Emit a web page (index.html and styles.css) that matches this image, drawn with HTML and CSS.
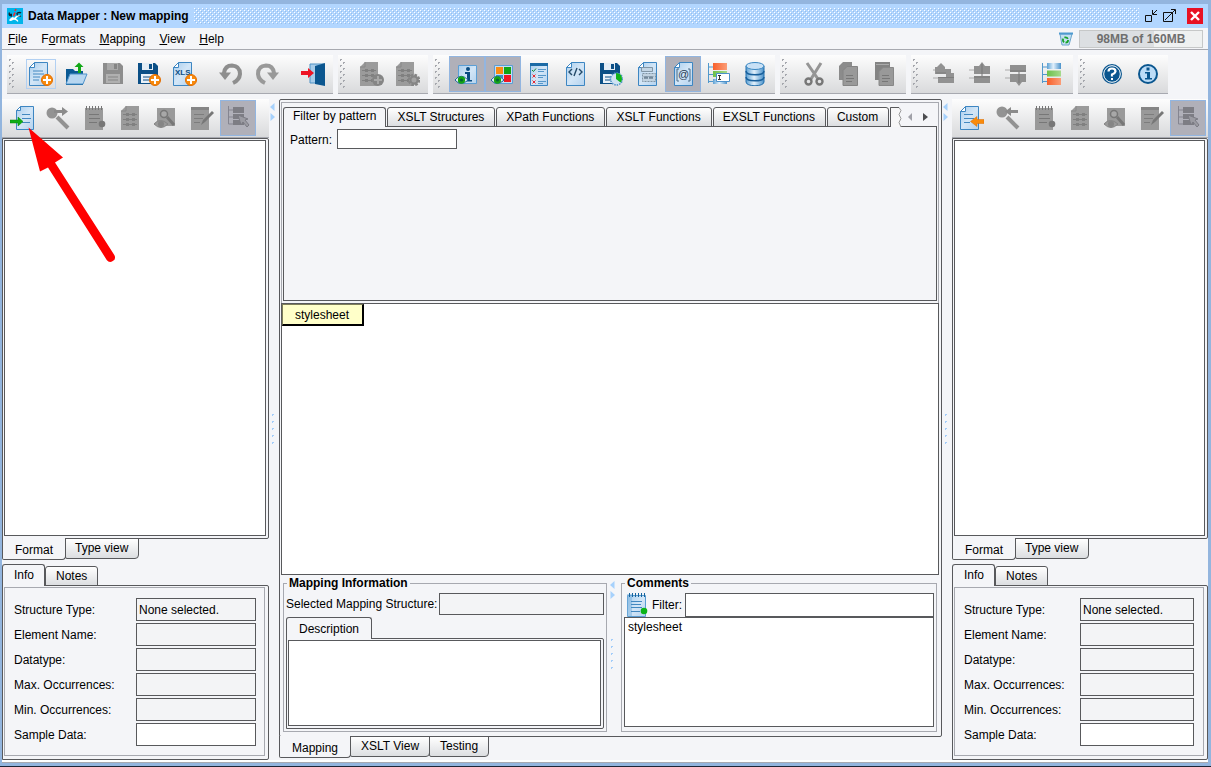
FILE: index.html
```
<!DOCTYPE html>
<html lang="en">
<head>
<meta charset="utf-8">
<title>Data Mapper : New mapping</title>
<link rel="stylesheet" href="styles.css">
</head>
<body>
<svg class="defs" aria-hidden="true">
  <defs>
    <linearGradient id="paper" x1="0" y1="0" x2="1" y2="1"><stop offset="0" stop-color="#a9cdec"/><stop offset=".5" stop-color="#d3e6f7"/><stop offset="1" stop-color="#b4d2ee"/></linearGradient>
    <linearGradient id="metal" x1="0" y1="0" x2="1" y2="0"><stop offset="0" stop-color="#5ba0d4"/><stop offset=".45" stop-color="#e2f0fb"/><stop offset="1" stop-color="#4a92cb"/></linearGradient>
    <linearGradient id="orange" x1="0" y1="0" x2="1" y2="0"><stop offset="0" stop-color="#f8602b"/><stop offset="1" stop-color="#fb9d77"/></linearGradient>
    <linearGradient id="lime" x1="0" y1="0" x2="1" y2="0"><stop offset="0" stop-color="#6cc04a"/><stop offset="1" stop-color="#a6da8d"/></linearGradient>
    <pattern id="bumps" width="4" height="4" patternUnits="userSpaceOnUse"><rect width="1" height="1" fill="#fff"/><rect x="1" y="1" width="1" height="1" fill="#98bfea"/><rect x="2" y="2" width="1" height="1" fill="#fff"/><rect x="3" y="3" width="1" height="1" fill="#98bfea"/></pattern>
    <pattern id="gripdots" width="6" height="6" patternUnits="userSpaceOnUse"><path d="M0 0h2v1h-1v1h-1zM3 3h2v1h-1v1h-1z" fill="#a5a7ad"/></pattern>
    <pattern id="splitdots" width="4" height="7" patternUnits="userSpaceOnUse"><path d="M0 0h2v1h-1v1h-1z" fill="#a3cdfa"/></pattern>

    <symbol id="doc" viewBox="0 0 24 24"><path d="M5.500 .5H18.500V23.500H.5V5.500z" fill="url(#paper)" stroke="#3d86c2"/><path d="M.5 5.500H5.500V.5z" fill="#fff" stroke="#3d86c2"/></symbol>
    <symbol id="graydoc" viewBox="0 0 24 24"><path d="M5 0H18V24H0V5z" fill="#9b9b9b"/><path d="M0 5h5V0" fill="none" stroke="#888"/></symbol>
    <symbol id="plus" viewBox="0 0 24 24"><circle cx="18" cy="18" r="5.500" fill="#f88a0c" stroke="#e26d00"/><path d="M18 14v8M14 18h8" stroke="#fff" stroke-width="2"/></symbol>
    <symbol id="eye" viewBox="0 0 24 24"><path d="M0 18Q6 10.500 13 18Q6 25 0 18z" fill="#fff" stroke="#17619b"/><circle cx="6.500" cy="18" r="3.700" fill="#15a316"/><circle cx="6.500" cy="18" r="1.600" fill="#063"/></symbol>
    <symbol id="floppy" viewBox="0 0 24 24"><path d="M1 1H18L21 4V22H1z" fill="currentColor"/><path d="M5 1h11v7H5z" fill="#e4edf5"/><path d="M12 2h3v5h-3z" fill="currentColor"/><path d="M4 12h14v9H4z" fill="#e9f1f8"/><path d="M6 15h9M6 18h9" stroke="currentColor"/></symbol>
    <symbol id="tree" viewBox="0 0 24 24"><path d="M1.500 1V21M1.500 5H7M1.500 12.500H7M1.500 19.500H7" fill="none" stroke="#5198cc"/></symbol>

    <symbol id="i-new" viewBox="0 0 24 24"><use href="#doc"/><path d="M4 9h10M4 12h11M4 15h7M4 18h6" stroke="#4288c0"/><use href="#plus"/></symbol>
    <symbol id="i-open" viewBox="0 0 24 24"><path d="M1 23V7h7l2 2h8v14z" fill="#0b5a94"/><path d="M5 12h17l-4 10H1z" fill="#b7d6f0" stroke="#4f93ca"/><path d="M13 11V5h-3.500L14 .5 18.500 5H16v6z" fill="#12a817"/></symbol>
    <symbol id="i-save" viewBox="0 0 24 24"><path d="M2 1H19L22 4V22H2z" fill="#8d8d8d"/><path d="M6 1h11v7H6z" fill="#a9a9a9"/><path d="M13 2h3v5h-3z" fill="#858585"/><path d="M5 12h14v9H5z" fill="#b0b0b0"/><path d="M7 15h10M7 18h10" stroke="#858585"/></symbol>
    <symbol id="i-saveas" viewBox="0 0 24 24"><use href="#floppy"/><use href="#plus"/></symbol>
    <symbol id="i-xls" viewBox="0 0 24 24"><use href="#doc"/><text x="2" y="13" font-family="Liberation Sans" font-size="8" font-weight="bold" fill="#0b4f86">XLS</text><use href="#plus"/></symbol>
    <symbol id="i-undo" viewBox="0 0 24 24"><path d="M5 14V11Q6 3.500 13 3.500Q21 4 21 12Q20.500 18 14 21" fill="none" stroke="#8e8e8e" stroke-width="4"/><path d="M0 10.500h12L6 18z" fill="#8e8e8e"/></symbol>
    <symbol id="i-redo" viewBox="0 0 24 24"><path d="M19 14V11Q18 3.500 11 3.500Q3 4 3 12Q3.500 18 10 21" fill="none" stroke="#999" stroke-width="4"/><path d="M24 10.500H12L18 18z" fill="#999"/></symbol>
    <symbol id="i-exit" viewBox="0 0 24 24"><path d="M9 2h14v19H9z" fill="#a8cdea" stroke="#4c91c5"/><path d="M14 4L24 1V24L14 22z" fill="#0b568f"/><path d="M0 9h7V6l6 5-6 5v-3H0z" fill="#ee1424"/></symbol>
    <symbol id="i-rows" viewBox="0 0 24 24"><use href="#graydoc"/><path d="M2 8.500h14M2 13.500h14M2 18.500h14" stroke="#808080"/><path d="M5 7h3v3H5zM11 7h3v3h-3zM5 12h3v3H5zM11 12h3v3h-3zM5 17h3v3H5zM11 17h3v3h-3z" fill="#808080"/></symbol>
    <symbol id="i-rowscentered" viewBox="-3 0 24 24"><use href="#i-rows" width="24" height="24"/></symbol>
    <symbol id="i-rowadd" viewBox="0 0 24 24"><use href="#i-rows"/><circle cx="18" cy="18" r="6" fill="#858585"/><path d="M18 14v8M14 18h8" stroke="#a8a8a8" stroke-width="2"/></symbol>
    <symbol id="i-rowgear" viewBox="0 0 24 24"><use href="#i-rows"/><circle cx="18" cy="18" r="5" fill="#a3a3a3" stroke="#858585" stroke-width="2.500" stroke-dasharray="2.500 1.400"/><circle cx="18" cy="18" r="3.500" fill="none" stroke="#858585" stroke-width="2"/></symbol>
    <symbol id="i-infoeye" viewBox="0 0 24 24"><path d="M3.500 3.500h18v18h-18z" fill="url(#paper)" stroke="#5c9fd5"/><circle cx="13" cy="7" r="2" fill="#094b80"/><path d="M10 10h5v8h2v1.500h-7V18h2v-6h-2z" fill="#094b80"/><use href="#eye"/></symbol>
    <symbol id="i-coloreye" viewBox="0 0 24 24"><path d="M3.500 3.500h18v18h-18z" fill="#c4def4" stroke="#5c9fd5"/><path d="M5 5h7v7H5z" fill="#fb8b11"/><path d="M13 5h7v7h-7z" fill="#11a513"/><path d="M13 13h7v7h-7z" fill="#f01725"/><path d="M5 13h7v7H5z" fill="#3b8fc8"/><use href="#eye"/></symbol>
    <symbol id="i-checks" viewBox="-3 0 24 24"><path d="M.5 1.500h17v22H.5z" fill="url(#paper)" stroke="#3d86c2"/><path d="M0 1h18v3H0z" fill="#1b6aa6"/><path d="M8 7.500h8M8 9.500h6M8 13.500h8M8 15.500h5M8 19.500h8M8 21.500h5" stroke="#5797c9"/><path d="M2 8l1.500 1.500L6 6.500" fill="none" stroke="#138a32"/><path d="M2.500 12.500l3 3m0-3l-3 3M2.500 18.500l3 3m0-3l-3 3" stroke="#e72a33"/></symbol>
    <symbol id="i-code" viewBox="-3 0 24 24"><use href="#doc" width="24" height="24"/><path d="M6 7L3 10l3 3M13 7l3 3-3 3M11 6L8 14" fill="none" stroke="#234a69" stroke-width="1.400"/></symbol>
    <symbol id="i-saveclock" viewBox="0 0 24 24"><g color="#0b4f86"><use href="#floppy"/></g><circle cx="17.500" cy="17" r="6" fill="#cfe2f3" stroke="#4d93c9" stroke-width="1.500" stroke-dasharray="1.500 1"/><path d="M17 17V11Q23 11 23 17Q23 19 21.500 20.500z" fill="#10b31a"/></symbol>
    <symbol id="i-www" viewBox="-3 0 24 24"><use href="#doc" width="24" height="24"/><path d="M3.500 5.500h11v4h-11z" fill="#c3d5e4" stroke="#8195a5"/><path d="M4.500 11.500h13v8h-13z" fill="#c1d2e0" stroke="#8195a5" stroke-dasharray="2 1"/><path d="M6 14l1 3 1-3 1 3 1-3M11 14l1 3 1-3 1 3 1-3" fill="none" stroke="#73889a"/></symbol>
    <symbol id="i-at" viewBox="-3 0 24 24"><use href="#doc" width="24" height="24"/><text x="4" y="16" font-family="Liberation Sans" font-size="11" fill="#1f3b52">@</text><path d="M5 7H3v12h2M14 7h2v12h-2" fill="none" stroke="#4d6d87"/></symbol>
    <symbol id="i-treeedit" viewBox="0 0 24 24"><use href="#tree"/><path d="M6 1h14v7H6z" fill="url(#orange)"/><path d="M6 9h14v6H6z" fill="url(#lime)"/><path d="M6 17h14v5H6z" fill="url(#metal)"/><path d="M9.500 11.500h13v8h-13z" fill="#fff" stroke="#4c91cb"/><path d="M11 13.500h3M11 17.500h3M12.500 13v5" stroke="#333"/></symbol>
    <symbol id="i-db" viewBox="0 0 24 24"><path d="M3 4v16c0 5 18 5 18 0V4z" fill="url(#metal)" stroke="#226fac"/><ellipse cx="12" cy="4" rx="9" ry="3.500" fill="#c9e1f6" stroke="#3a87c2"/><path d="M3 9c0 5 18 5 18 0M3 15c0 5 18 5 18 0" fill="none" stroke="#185f9b" stroke-width="1.500"/></symbol>
    <symbol id="i-cut" viewBox="0 0 24 24"><path d="M5 1L16 17M19 1L9 17" stroke="#959595" stroke-width="3"/><circle cx="6.500" cy="19.500" r="3" fill="none" stroke="#777" stroke-width="2.400"/><circle cx="17.500" cy="19.500" r="3" fill="none" stroke="#777" stroke-width="2.400"/></symbol>
    <symbol id="i-copy" viewBox="0 0 24 24"><path d="M5 0h9v18H1V4z" fill="#8b8b8b"/><path d="M9 4.500h10.500v19H5V8.500z" fill="#999" stroke="#848484"/><path d="M8 13.500h7M8 16.500h8M8 19.500h6" stroke="#777"/></symbol>
    <symbol id="i-paste" viewBox="0 0 24 24"><path d="M1 0h15v18H1z" fill="#838383"/><path d="M2 2.500h13" stroke="#aaa"/><path d="M9 5.500h10.500v18H5V9.500z" fill="#999" stroke="#888"/><path d="M8 13.500h7M8 16.500h8M8 19.500h6" stroke="#777"/></symbol>
    <symbol id="i-moveout" viewBox="0 0 24 24"><path d="M0 16h5M0 8h3" stroke="#aaa"/><path d="M2 5H4L8 1l4 4v2h6v4h3v10H5v-6h8v-3H2z" fill="#929292"/><path d="M5 15.500h16M3 11h10" stroke="#7d7d7d"/></symbol>
    <symbol id="i-moveup" viewBox="0 0 24 24"><path d="M0 8h5M0 16h5" stroke="#aaa"/><path d="M5 4h5l3-4 3 4h5v8H5zM5 14h16v7H5z" fill="#909090"/><path d="M13 2v12M5 15h16" stroke="#777"/></symbol>
    <symbol id="i-movedown" viewBox="0 0 24 24"><path d="M0 8h5M0 16h5" stroke="#aaa"/><path d="M5 3h16v7H5zM5 12h16v8h-4l-3 4-3-4H5z" fill="#909090"/><path d="M14 10v11M5 9h16" stroke="#777"/></symbol>
    <symbol id="i-structure" viewBox="0 0 24 24"><use href="#tree"/><path d="M6 1h14v6H6z" fill="url(#metal)"/><path d="M6 8.500h14v6H6z" fill="url(#lime)"/><path d="M6 16h14v7H6z" fill="url(#orange)"/></symbol>
    <symbol id="i-help" viewBox="0 0 24 24"><circle cx="12" cy="12" r="10" fill="#0a568f"/><circle cx="12" cy="12" r="8.300" fill="none" stroke="#fff"/><path d="M8.500 9.500Q8.500 6.500 12 6.500T15.500 9.500Q15 11.500 12 12.500V14.500" fill="none" stroke="#fff" stroke-width="2.200"/><path d="M11 16h2v2h-2z" fill="#fff"/></symbol>
    <symbol id="i-info" viewBox="0 0 24 24"><circle cx="12" cy="12" r="9" fill="#bcdcf7" stroke="#0a568f" stroke-width="2"/><path d="M10.500 5.500h3v3h-3zM9 10h5v6h2v1.500H9V16h2v-4.500H9z" fill="#0a568f"/></symbol>

    <symbol id="i-import" viewBox="0 0 24 24"><path d="M10.500 .5H23.500V23.500H6.500V4.500z" fill="url(#paper)" stroke="#3d86c2"/><path d="M6.500 4.500h4v-4z" fill="#fff" stroke="#3d86c2"/><path d="M12 8.500h8M12 12.500h9M12 16.500h8" stroke="#4288c0"/><path d="M0 14h8v-3l5 4.500-5 4.500v-3H0z" fill="#0fae16" stroke="#07850e" stroke-width=".5"/></symbol>
    <symbol id="i-export" viewBox="0 0 24 24"><use href="#doc"/><path d="M4 8.500h9M4 12.500h10M4 16.500h6" stroke="#4288c0"/><path d="M24 13.500h-7v-3l-6.500 5 6.500 5v-3h7z" fill="#f98b0c" stroke="#db6a00" stroke-width=".5"/></symbol>
    <symbol id="i-findnext" viewBox="0 0 24 24"><path d="M11 11L22 22" stroke="#929292" stroke-width="4"/><circle cx="6" cy="7" r="5.500" fill="#939393"/><path d="M8 4h8V1l6 4.500-6 4.500V7H8z" fill="#8b8b8b"/></symbol>
    <symbol id="i-findprev" viewBox="0 0 24 24"><path d="M11 11L22 22" stroke="#929292" stroke-width="4"/><circle cx="6" cy="6" r="5.500" fill="#939393"/><path d="M22 4h-7V1L9 5.500 15 10V7h7z" fill="#8b8b8b"/></symbol>
    <symbol id="i-note" viewBox="-3 0 24 24"><path d="M0 2h18v22H0z" fill="#999"/><path d="M1.500 0v4M4.500 0v4M7.500 0v4M10.500 0v4M13.500 0v4M16.500 0v4" stroke="#777"/><path d="M4 8.500h10M4 12.500h11M4 16.500h8" stroke="#777"/><circle cx="17" cy="18" r="3.300" fill="#777"/></symbol>
    <symbol id="i-preview" viewBox="0 0 24 24"><path d="M3 2h18v18H3z" fill="#9a9a9a"/><circle cx="10" cy="8" r="3.500" fill="#a8a8a8" stroke="#777" stroke-width="1.500"/><path d="M13 11l7 8" stroke="#777" stroke-width="3"/><path d="M0 18Q6 11 14 18Q7 25 0 18z" fill="#999" stroke="#858585"/><circle cx="7" cy="18" r="3" fill="#858585"/></symbol>
    <symbol id="i-edit" viewBox="0 0 24 24"><path d="M1 1h18v23H1z" fill="#999"/><path d="M1 1h18v3H1z" fill="#858585"/><path d="M4 8.500h10M4 12.500h9M4 16.500h6" stroke="#7d7d7d"/><path d="M11 19l2-5 9-9 2 2-9 9z" fill="#777"/></symbol>
    <symbol id="i-select" viewBox="0 0 24 24"><path d="M2.500 0V18H7M2.500 4H7M2.500 11H7" fill="none" stroke="#858590"/><path d="M7 1h11v6H7zM7 8h11v5H7zM7 14h11v5H7z" fill="#7d7d84"/><path d="M12 9l10 4-3 1 4 5-2 2-4-5-2 3z" fill="#9b9ba2" stroke="#7c7c84"/></symbol>
    <symbol id="i-notecolor" viewBox="0 0 24 24"><path d="M.5 2.500h18v21H.5z" fill="url(#paper)" stroke="#5a9dd2"/><path d="M0 1h5v22H0z" fill="#75afde" opacity=".5"/><path d="M2.500 0v4M5.500 0v4M8.500 0v4M11.500 0v4M14.500 0v4M17.500 0v4" stroke="#16639d"/><path d="M4 8.500h11M4 11.500h10M4 14.500h11M4 18.500h9" stroke="#4288c0"/><circle cx="17" cy="18" r="3.300" fill="#0bb418"/></symbol>
    <symbol id="i-splitarrows" viewBox="0 0 6 18"><path d="M4.500 0V8L0 4zM.5 10v8L5 14z" fill="#a6d1fc"/></symbol>
  </defs>
</svg>

<header class="titlebar">
  <svg class="logo" viewBox="0 0 16 16" aria-hidden="true"><path d="M0 0h16v16H0z" fill="#00b5ea"/><path d="M2 6.500h3M2.500 4.500Q1 8 5 8M10 5q3-1 4 0M10 5q0 4 4 3" fill="none" stroke="#14222e" stroke-width="1.300"/><path d="M9 1l-1 2M8 4.500L6.500 8" stroke="#ef2b2b" stroke-width="1.600"/><path d="M2 12q4-5 5-2q3-4 7-2q-4 0-5 3q3 1 2 3q-3-3-5-2q-3 2-4 0" fill="#fff"/></svg>
  <h1 class="title">Data Mapper : New mapping</h1>
  <svg class="texture" aria-hidden="true"><rect width="100%" height="16" fill="url(#bumps)"/></svg>
  <div class="winbuttons">
    <button class="winbtn" aria-label="Minimize"><svg width="14" height="14" viewBox="0 0 14 14" fill="none" stroke="#111"><path d="M1.500 6.500h6v6h-6z"/><path d="M8.500 1v4.500H13M9 5l4-4" /></svg></button>
    <button class="winbtn" aria-label="Maximize"><svg width="14" height="14" viewBox="0 0 14 14" fill="none" stroke="#111"><path d="M1.500 3.500h9v9h-9z"/><path d="M3 11l10-10M9 .5h4.500V5"/></svg></button>
    <button class="winbtn close" aria-label="Close"><svg width="16" height="16" viewBox="0 0 16 16"><path d="M4 4l8 8M12 4l-8 8" stroke="#fff" stroke-width="2.400"/></svg></button>
  </div>
</header>

<nav class="menubar">
  <button class="menu"><u>F</u>ile</button>
  <button class="menu">F<u>o</u>rmats</button>
  <button class="menu"><u>M</u>apping</button>
  <button class="menu"><u>V</u>iew</button>
  <button class="menu"><u>H</u>elp</button>
  <div class="memory">
    <button class="gc" aria-label="Collect garbage"><svg width="14" height="14" viewBox="0 0 14 14"><path d="M1 2l2 11h7l3-11z" fill="#c3dff2" stroke="#6aa5cc"/><path d="M0 1.500h14" stroke="#4e9ad0" stroke-width="2"/><circle cx="6.500" cy="8" r="2.600" fill="none" stroke="#17a32a" stroke-width="1.800" stroke-dasharray="4 1.400"/></svg></button>
    <div class="meter">98MB of 160MB</div>
  </div>
</nav>

<div class="toolbars">
  <div class="toolbar">
    <svg class="grip"><rect width="6" height="30" fill="url(#gripdots)"/></svg>
    <button class="tool hover" aria-label="New"><svg><use href="#i-new"/></svg></button>
    <button class="tool" aria-label="Open"><svg><use href="#i-open"/></svg></button>
    <button class="tool" aria-label="Save"><svg><use href="#i-save"/></svg></button>
    <button class="tool navy" aria-label="Save as"><svg><use href="#i-saveas"/></svg></button>
    <button class="tool" aria-label="Export to XLS"><svg><use href="#i-xls"/></svg></button>
    <span class="space"></span>
    <button class="tool" aria-label="Undo"><svg><use href="#i-undo"/></svg></button>
    <button class="tool" aria-label="Redo"><svg><use href="#i-redo"/></svg></button>
    <span class="space"></span>
    <button class="tool" aria-label="Exit"><svg><use href="#i-exit"/></svg></button>
  </div>
  <div class="toolbar">
    <svg class="grip"><rect width="6" height="30" fill="url(#gripdots)"/></svg>
    <button class="tool" aria-label="Add rows"><svg><use href="#i-rowadd"/></svg></button>
    <button class="tool" aria-label="Row settings"><svg><use href="#i-rowgear"/></svg></button>
  </div>
  <div class="toolbar">
    <svg class="grip"><rect width="6" height="30" fill="url(#gripdots)"/></svg>
    <button class="tool on" aria-label="Show info"><svg><use href="#i-infoeye"/></svg></button>
    <button class="tool on" aria-label="Show colors"><svg><use href="#i-coloreye"/></svg></button>
    <button class="tool" aria-label="Validate"><svg><use href="#i-checks"/></svg></button>
    <button class="tool" aria-label="Source"><svg><use href="#i-code"/></svg></button>
    <button class="tool" aria-label="Save with history"><svg><use href="#i-saveclock"/></svg></button>
    <button class="tool" aria-label="Namespaces"><svg><use href="#i-www"/></svg></button>
    <button class="tool on" aria-label="Attributes"><svg><use href="#i-at"/></svg></button>
    <button class="tool" aria-label="Rename"><svg><use href="#i-treeedit"/></svg></button>
    <button class="tool" aria-label="Database"><svg><use href="#i-db"/></svg></button>
  </div>
  <div class="toolbar">
    <svg class="grip"><rect width="6" height="30" fill="url(#gripdots)"/></svg>
    <button class="tool" aria-label="Cut"><svg><use href="#i-cut"/></svg></button>
    <button class="tool" aria-label="Copy"><svg><use href="#i-copy"/></svg></button>
    <button class="tool" aria-label="Paste"><svg><use href="#i-paste"/></svg></button>
  </div>
  <div class="toolbar">
    <svg class="grip"><rect width="6" height="30" fill="url(#gripdots)"/></svg>
    <button class="tool" aria-label="Move out"><svg><use href="#i-moveout"/></svg></button>
    <button class="tool" aria-label="Move up"><svg><use href="#i-moveup"/></svg></button>
    <button class="tool" aria-label="Move down"><svg><use href="#i-movedown"/></svg></button>
    <button class="tool" aria-label="Structure"><svg><use href="#i-structure"/></svg></button>
  </div>
  <div class="toolbar">
    <svg class="grip"><rect width="6" height="30" fill="url(#gripdots)"/></svg>
    <button class="tool" aria-label="Help"><svg><use href="#i-help"/></svg></button>
    <button class="tool" aria-label="About"><svg><use href="#i-info"/></svg></button>
  </div>
</div>

<main class="workspace">
  <section class="side source">
    <div class="sidebar-tools">
      <button class="tool" aria-label="Import format"><svg><use href="#i-import"/></svg></button>
      <button class="tool" aria-label="Find next"><svg><use href="#i-findnext"/></svg></button>
      <button class="tool" aria-label="Note"><svg><use href="#i-note"/></svg></button>
      <button class="tool" aria-label="Rows"><svg><use href="#i-rowscentered"/></svg></button>
      <button class="tool" aria-label="Preview"><svg><use href="#i-preview"/></svg></button>
      <button class="tool" aria-label="Edit"><svg><use href="#i-edit"/></svg></button>
      <button class="tool on" aria-label="Select"><svg><use href="#i-select"/></svg></button>
    </div>
    <div class="frame"><div class="well"></div></div>
    <div class="tabs below">
      <button class="tab current">Format</button><button class="tab">Type view</button>
    </div>
    <div class="tabs above">
      <button class="tab current">Info</button><button class="tab">Notes</button>
    </div>
    <div class="frame info">
      <form class="fields">
        <label for="s-type">Structure Type:</label><input id="s-type" value="None selected." readonly>
        <label for="s-name">Element Name:</label><input id="s-name" readonly>
        <label for="s-data">Datatype:</label><input id="s-data" readonly>
        <label for="s-max">Max. Occurrences:</label><input id="s-max" readonly>
        <label for="s-min">Min. Occurrences:</label><input id="s-min" readonly>
        <label for="s-sample">Sample Data:</label><input id="s-sample">
      </form>
    </div>
  </section>

  <div class="splitter"><svg class="splitarrows"><use href="#i-splitarrows"/></svg><svg class="splitdots"><rect width="4" height="35" fill="url(#splitdots)"/></svg></div>

  <section class="center">
    <div class="editor">
      <div class="functions">
        <div class="tabs above">
          <button class="tab current">Filter by pattern</button><button class="tab">XSLT Structures</button><button class="tab">XPath Functions</button><button class="tab">XSLT Functions</button><button class="tab">EXSLT Functions</button><button class="tab">Custom</button>
          <svg class="torn" viewBox="0 0 12 20"><path d="M.5 20V.5H9l2 3-2 4 2 4-2 4 2 4.500" fill="#f7f7f8" stroke="#999"/><path d="M.5 20V.5H9" fill="none" stroke="#58595c"/></svg>
          <button class="scroll" aria-label="Previous tabs"><svg width="4" height="8"><path d="M4 0v8L0 4z" fill="#a0a1a8"/></svg></button>
          <button class="scroll" aria-label="Next tabs"><svg width="5" height="8"><path d="M0 0v8l5-4z" fill="#4c4d50"/></svg></button>
        </div>
        <div class="filter"><label for="pattern">Pattern:</label><input id="pattern"></div>
      </div>
      <div class="canvas"><button class="node">stylesheet</button></div>
      <div class="groups">
        <fieldset class="group mapping">
          <legend>Mapping Information</legend>
          <div class="row"><label for="selected">Selected Mapping Structure:</label><input id="selected" readonly></div>
          <div class="tabs above"><button class="tab current">Description</button></div>
          <div class="frame"><textarea class="well" aria-label="Description"></textarea></div>
        </fieldset>
        <div class="splitter inner"><svg class="splitarrows"><use href="#i-splitarrows"/></svg><svg class="splitdots"><rect width="4" height="35" fill="url(#splitdots)"/></svg></div>
        <fieldset class="group comments">
          <legend>Comments</legend>
          <div class="row"><svg class="noteicon" aria-hidden="true"><use href="#i-notecolor"/></svg><label for="filter">Filter:</label><input id="filter"></div>
          <div class="list">stylesheet</div>
        </fieldset>
      </div>
    </div>
    <div class="tabs below">
      <button class="tab current">Mapping</button><button class="tab">XSLT View</button><button class="tab">Testing</button>
    </div>
  </section>

  <div class="splitter"><svg class="splitarrows"><use href="#i-splitarrows"/></svg><svg class="splitdots"><rect width="4" height="35" fill="url(#splitdots)"/></svg></div>

  <section class="side target">
    <div class="sidebar-tools">
      <button class="tool" aria-label="Export format"><svg><use href="#i-export"/></svg></button>
      <button class="tool" aria-label="Find previous"><svg><use href="#i-findprev"/></svg></button>
      <button class="tool" aria-label="Note"><svg><use href="#i-note"/></svg></button>
      <button class="tool" aria-label="Rows"><svg><use href="#i-rowscentered"/></svg></button>
      <button class="tool" aria-label="Preview"><svg><use href="#i-preview"/></svg></button>
      <button class="tool" aria-label="Edit"><svg><use href="#i-edit"/></svg></button>
      <button class="tool on" aria-label="Select"><svg><use href="#i-select"/></svg></button>
    </div>
    <div class="frame"><div class="well"></div></div>
    <div class="tabs below">
      <button class="tab current">Format</button><button class="tab">Type view</button>
    </div>
    <div class="tabs above">
      <button class="tab current">Info</button><button class="tab">Notes</button>
    </div>
    <div class="frame info">
      <form class="fields">
        <label for="t-type">Structure Type:</label><input id="t-type" value="None selected." readonly>
        <label for="t-name">Element Name:</label><input id="t-name" readonly>
        <label for="t-data">Datatype:</label><input id="t-data" readonly>
        <label for="t-max">Max. Occurrences:</label><input id="t-max" readonly>
        <label for="t-min">Min. Occurrences:</label><input id="t-min" readonly>
        <label for="t-sample">Sample Data:</label><input id="t-sample">
      </form>
    </div>
  </section>
</main>
<div class="statusline"></div>

<svg class="pointer" viewBox="0 0 90 136" aria-hidden="true"><path d="M.5 .5L35 30.500 27 35.500 86.300 128.100a4.500 4.500 0 0 1-7.600 4.800L20 40.500 12 44.500z" fill="#f00"/></svg>
</body>
</html>
```
FILE: styles.css
```
:root {
  --frame: #93b5de;
  --title: #b2d6ff;
  --panel: #f4f5f8;
  --line: #58595c;
  --soft: #a7a9b0;
}

* { box-sizing: border-box; }

html { background: #1c2536; }

body {
  margin: 0;
  height: calc(100vh - 1px);
  display: flex;
  flex-direction: column;
  overflow: hidden;
  position: relative;
  border: solid var(--frame);
  border-width: 4px 3px 3px 2px;
  background: var(--panel);
  color: #000;
  font: 12px/14px "Liberation Sans", Arial, sans-serif;
}

button, input, textarea {
  margin: 0;
  padding: 0;
  border: 0;
  border-radius: 0;
  background: none;
  color: inherit;
  font: inherit;
}

button { white-space: nowrap; }
.defs { position: absolute; width: 0; height: 0; }
svg { display: block; flex: none; }

/* Title bar */
.titlebar {
  display: flex;
  align-items: center;
  height: 24px;
  padding: 0 5px;
  background: var(--title);
}
.logo { width: 16px; height: 16px; }
.title { margin: 0 5px; font-size: 12px; line-height: 16px; }
.texture { flex: 1; height: 16px; min-width: 0; }
.winbuttons { display: flex; align-items: center; gap: 4px; padding-left: 5px; }
.winbtn.close { margin-left: 7px; background: #e81123; }

/* Menu bar */
.menubar {
  display: flex;
  align-items: center;
  gap: 14px;
  height: 22px;
  padding: 0 5px 0 6px;
  border-bottom: 1px solid var(--soft);
}
.memory { display: flex; align-items: center; gap: 6px; margin-left: auto; }
.meter {
  width: 124px;
  height: 18px;
  border: 1px solid #c6c8c8;
  background: linear-gradient(90deg, #dcdfe2 61%, #eff1f1 61%);
  color: #6f6f6f;
  font-weight: bold;
  line-height: 17px;
  text-align: center;
}

/* Toolbars */
.toolbars { display: flex; gap: 5px; padding: 5px; }
.toolbar, .sidebar-tools {
  display: flex;
  height: 39px;
  padding: 1px 2px;
  border-bottom: 1px solid var(--soft);
  background: linear-gradient(#fdfdfd, #d9dadc);
}
.toolbar { padding-left: 0; }
.grip { width: 6px; height: 30px; margin: 3px 8px 0 2px; }
.space { width: 10px; }
.tool {
  display: flex;
  align-items: center;
  justify-content: center;
  width: 36px;
  height: 36px;
}
.tool svg { width: 24px; height: 24px; }
.tool.navy { color: #0b4f86; }
.tool.on { border: 1px solid #92b5e0; background: #b0b0b9; }
.tool.hover { width: 30px; height: 30px; margin: 3px; border: 1px solid #b2d0f2; }

/* Work area */
.workspace { display: flex; flex: 1; min-height: 0; }
.side { display: flex; flex-direction: column; }
.source { width: 267px; }
.target { width: 256px; }
.center { display: flex; flex: 1; flex-direction: column; min-width: 0; }

.splitter {
  display: flex;
  flex-direction: column;
  align-items: center;
  justify-content: center;
  position: relative;
  width: 10px;
  padding-top: 4px;
}
.splitarrows { position: absolute; top: 3px; left: 1px; width: 6px; height: 20px; }
.splitdots { width: 4px; height: 35px; }

.frame {
  display: flex;
  flex: 1;
  min-height: 0;
  padding: 1px 2px 2px 1px;
  border: 1px solid var(--line);
  border-radius: 0 2px 2px 0;
}
.well {
  flex: 1;
  min-width: 0;
  border: 1px solid var(--line);
  background: #fff;
  resize: none;
}
.frame.info { flex: none; padding: 1px 3px 3px 1px; }

.fields {
  flex: 1;
  display: grid;
  grid-template-columns: 122px 1fr;
  grid-auto-rows: 23px;
  gap: 2px 0;
  align-items: center;
  padding: 10px 8px 9px 9px;
  border: 1px solid var(--soft);
}
.target .fields { grid-template-columns: 116px 1fr; padding-right: 9px; }

input {
  min-width: 0;
  height: 23px;
  padding: 0 2px;
  border: 1px solid var(--line);
  background: #fff;
}
input:read-only { background: #f3f4f6; }

/* Tabs */
.tabs { display: flex; position: relative; }
.tab {
  height: 20px;
  padding: 0 10px 0 9px;
  border: 1px solid var(--line);
  background: linear-gradient(#fff, #dcdee1);
}
.tab.current { padding: 0 12px; background: var(--panel); }

.tabs.below { align-items: flex-start; margin-top: -1px; }
.below .tab { height: 21px; padding-bottom: 2px; border-radius: 0 0 4px 2px; }
.below .tab + .tab { margin-left: -1px; }
.below .tab.current { height: 22px; border-top: 0; padding: 2px 12px 0; }
.center .below { margin-bottom: 2px; }
.center .below .tab { padding-left: 10px; }
.center .below .tab.current { padding-left: 12px; }

.tabs.above { align-items: flex-end; margin-bottom: -1px; }
.above .tab { border-radius: 3px 3px 0 0; }
.above .tab.current { height: 22px; border-bottom: 0; }
.side .above { margin-top: 4px; }
.side .above .tab.current { padding: 0 10px 1px 11px; }
.side .above .tab:not(.current) { padding: 0 10px; }

/* Centre panel */
.editor {
  display: flex;
  flex: 1;
  flex-direction: column;
  min-height: 0;
  padding: 2px 2px 4px 1px;
  border: 1px solid var(--line);
  border-radius: 2px;
}
.functions {
  display: flex;
  flex-direction: column;
  height: 201px;
  padding: 4px 1px 2px;
  border: solid var(--soft);
  border-width: 1px 1px 0;
}
.functions .tabs { gap: 1px; }
.functions .tab.current { height: 20px; padding: 0 9px 3px; }
.scroll { display: flex; align-items: center; height: 20px; margin-left: 5px; }
.scroll + .scroll { margin-left: 10px; }
.torn { width: 12px; height: 20px; }
.filter {
  display: flex;
  flex: 1;
  align-items: flex-start;
  gap: 5px;
  padding: 2px 6px;
  border: 1px solid var(--line);
}
.filter label { line-height: 22px; }
.filter input { width: 120px; height: 20px; }

.canvas {
  flex: 1;
  min-height: 0;
  border: 1px solid var(--line);
  background: #fff;
}
.node {
  height: 22px;
  padding: 1px 13px 0 12px;
  border: solid #000;
  border-width: 1px 2px 2px 1px;
  border-top-color: #7e7e5a;
  border-left-color: #7e7e5a;
  background: #ffffc9;
}

.groups {
  display: grid;
  grid-template-columns: 324fr 14px 316fr;
  height: 157px;
  padding: 2px 2px 0;
}
.group {
  display: flex;
  flex-direction: column;
  min-width: 0;
  margin: 0;
  padding: 3px 2px 2px;
  border: 1px solid var(--soft);
}
.group.comments { padding-bottom: 4px; }
.group legend { margin-left: 1px; padding: 0 2px; font-weight: bold; line-height: 13px; }
.splitter.inner { width: 14px; padding-right: 2px; }
.inner .splitarrows { left: 3px; }
.row { display: flex; align-items: center; }
.row input { flex: 1; height: 22px; margin-left: 2px; }
.mapping .tabs { margin-top: 2px; }
.comments .row { padding-left: 3px; }
.comments .row input { height: 24px; margin-left: 3px; }
.noteicon { width: 24px; height: 24px; margin-right: 1px; }
.list {
  flex: 1;
  padding: 2px 3px;
  border: 1px solid var(--line);
  background: #fff;
}

.statusline { height: 3px; border: solid var(--soft); border-width: 0 0 1px; background: #fff; }

/* Callout arrow drawn over the source panel */
.pointer { position: absolute; top: 123px; left: 26px; width: 90px; height: 136px; }
```
